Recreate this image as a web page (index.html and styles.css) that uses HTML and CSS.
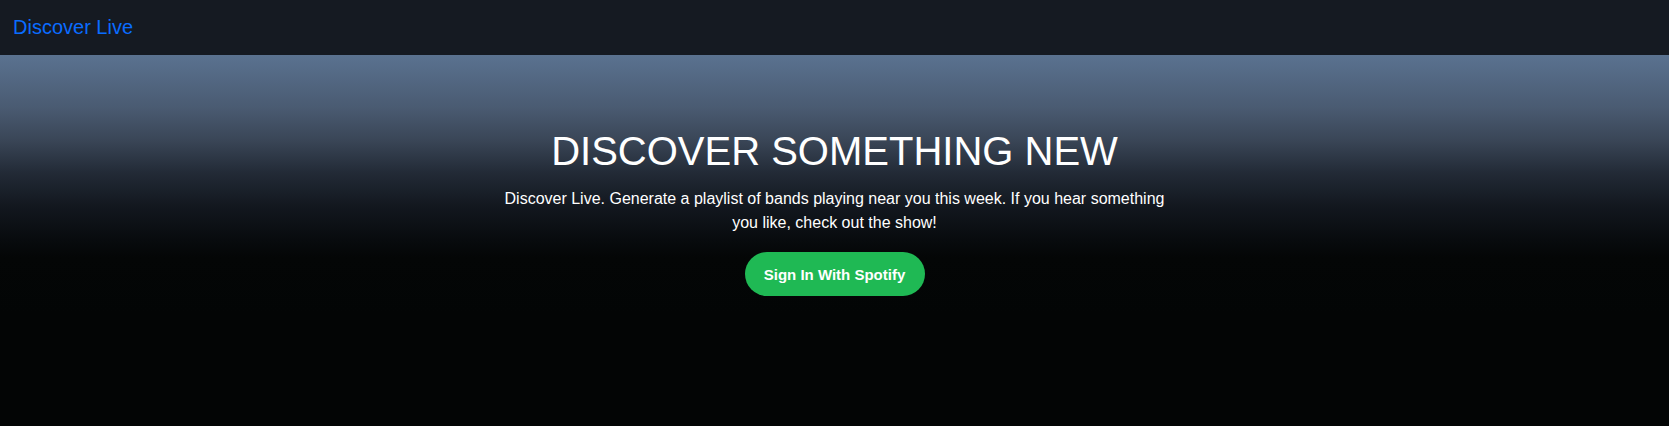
FILE: index.html
```html
<!DOCTYPE html>
<html lang="en">
<head>
<meta charset="utf-8">
<title>Discover Live</title>
<link rel="stylesheet" href="styles.css">
</head>
<body>
<nav class="navbar">
  <a class="brand" href="#">Discover Live</a>
</nav>
<main class="hero">
  <h1 class="title">DISCOVER SOMETHING NEW</h1>
  <p class="lead">Discover Live. Generate a playlist of bands playing near you this week. If you hear something you like, check out the show!</p>
  <a class="btn-spotify" href="#">Sign In With Spotify</a>
</main>
</body>
</html>
```

FILE: styles.css
```css
* { box-sizing: border-box; }
html, body { margin: 0; padding: 0; height: 100%; }
body {
  font-family: "Liberation Sans", Arial, Helvetica, sans-serif;
  background: #030505;
  color: #fff;
}
.navbar {
  height: 55px;
  background: #151a22;
  display: flex;
  align-items: center;
  padding: 0 13px;
}
.brand {
  color: #0a6cff;
  text-decoration: none;
  font-size: 20px;
  line-height: 1;
  margin-top: -2px;
}
.hero {
  height: calc(100% - 55px);
  background: linear-gradient(to bottom,
    #5a7290 0px,
    #4a5b72 52px,
    #3a4657 85px,
    #222a36 118px,
    #12171e 152px,
    #080b0e 185px,
    #040606 202px,
    #030505 260px);
  display: flex;
  flex-direction: column;
  align-items: center;
  padding-top: 72px;
  text-align: center;
}
.title {
  margin: 0;
  font-weight: 400;
  font-size: 40px;
  line-height: 48px;
}
.lead {
  margin: 12px 0 0;
  max-width: 676px;
  font-size: 16px;
  line-height: 24px;
}
.btn-spotify {
  margin-top: 17px;
  width: 180px;
  height: 44px;
  border-radius: 22px;
  background: #1fb954;
  color: #fff;
  text-decoration: none;
  font-size: 15px;
  font-weight: 700;
  display: flex;
  align-items: center;
  justify-content: center;
}
```
